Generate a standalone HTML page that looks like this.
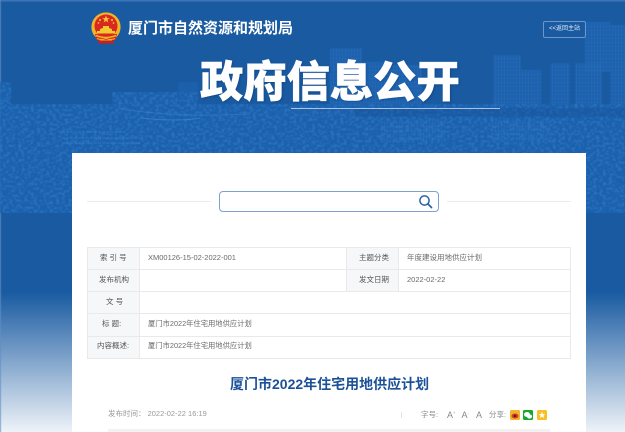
<!DOCTYPE html>
<html lang="zh-CN">
<head>
<meta charset="utf-8">
<title>厦门市2022年住宅用地供应计划</title>
<style>
html,body{margin:0;padding:0;width:625px;height:432px;overflow:hidden;background:#fff}
body{position:relative;font-family:"Liberation Sans","Noto Sans CJK SC",sans-serif}
.abs{position:absolute;white-space:nowrap}
#bg{position:absolute;left:0;top:0;width:625px;height:432px;background:linear-gradient(#195aa1 0,#195aa1 292px,#eef3f8 432px)}
#panel{position:absolute;left:72px;top:153px;width:514px;height:279px;background:#fff}
.line{position:absolute;background:#e9e9e9}
.cell{position:absolute;background:#f5f7f9}
.t{position:absolute;white-space:nowrap;font-size:7.5px;color:#6a6a6a;line-height:10px;filter:blur(.25px)}
</style>
</head>
<body>
<div id="bg"></div>
<svg class="abs" style="left:0;top:0" width="625" height="432" viewBox="0 0 625 432">
<defs>
<filter id="n1" x="0" y="0" width="100%" height="100%">
<feTurbulence type="fractalNoise" baseFrequency=".32 .42" numOctaves="2" seed="7" result="t"/>
<feColorMatrix in="t" type="matrix" values="0 0 0 0 0  0 0 0 0 0  0 0 0 0 0  0 0 0 5 -2.400" result="a"/>
<feComposite in="SourceGraphic" in2="a" operator="in"/>
<feGaussianBlur stdDeviation=".4"/>
</filter>
<filter id="soft" x="-5%" y="-5%" width="110%" height="110%"><feGaussianBlur stdDeviation=".5"/></filter>
<pattern id="st" width="3" height="4" patternUnits="userSpaceOnUse">
<rect width="1" height="4" fill="#2a74c0" opacity=".45"/>
<rect y="2" width="3" height="1" fill="#2a74c0" opacity=".25"/>
</pattern>
</defs>
<rect x="0" y="0" width="625" height="1.500" fill="#3c74b6"/>
<rect x="0" y="0" width="1.200" height="432" fill="#5f8fc6" opacity=".6"/>
<g filter="url(#soft)">
<g fill="#1c61ac">
<rect x="0" y="104" width="625" height="109"/>
<rect x="0" y="82" width="11" height="24"/>
<rect x="112" y="92" width="66" height="14"/>
<rect x="178" y="82" width="20" height="24"/>
<rect x="330" y="48" width="32" height="58"/>
<rect x="362" y="62" width="30" height="44"/>
<rect x="392" y="65" width="30" height="40"/>
<rect x="493" y="55" width="28" height="50"/>
<rect x="521" y="70" width="20" height="35"/>
<rect x="550" y="63" width="20" height="42"/>
<rect x="575" y="63" width="27" height="42"/>
<rect x="585" y="22" width="25" height="50"/>
<rect x="610" y="25" width="15" height="80"/>
</g>
<g fill="url(#st)">
<rect x="330" y="48" width="32" height="58"/>
<rect x="362" y="62" width="30" height="44"/>
<rect x="392" y="65" width="30" height="40"/>
<rect x="493" y="55" width="28" height="50"/>
<rect x="521" y="70" width="20" height="35"/>
<rect x="550" y="63" width="20" height="42"/>
<rect x="575" y="63" width="27" height="42"/>
<rect x="585" y="22" width="25" height="50"/>
<rect x="610" y="25" width="15" height="80"/>
<rect x="380" y="120" width="65" height="22"/>
<rect x="490" y="120" width="60" height="22"/>
</g>
</g>
<g filter="url(#n1)" fill="#2f7cca" opacity=".7">
<rect x="0" y="82" width="11" height="131"/>
<rect x="0" y="104" width="625" height="109"/>
<rect x="112" y="92" width="86" height="14"/>
</g>
<g fill="none" stroke="#3a86d4" stroke-width="1">
<path d="M118 108Q170 118 250 114" opacity=".5"/>
<path d="M140 118Q180 122 200 118" opacity=".7"/>
<path d="M62 132H125M62 138H140M62 143H140" stroke-dasharray="3 1" opacity=".6"/>
</g>
<rect x="355" y="108" width="270" height="9" fill="#174f94" opacity=".35" filter="url(#soft)"/>
</svg>

<!-- Emblem -->
<svg class="abs" style="left:90px;top:12px" width="32" height="34" viewBox="0 0 32 34">
<circle cx="16" cy="15" r="14.600" fill="#f0b429"/>
<circle cx="16" cy="14" r="11.500" fill="#d8281f"/>
<path d="M16 3.500l1 2.600h2.700l-2.200 1.700.8 2.700-2.300-1.600-2.300 1.600.8-2.700-2.200-1.700H15z" fill="#f6c933"/>
<circle cx="10" cy="8" r="1" fill="#f6c933"/><circle cx="22" cy="8" r="1" fill="#f6c933"/>
<circle cx="8.500" cy="11" r=".9" fill="#f6c933"/><circle cx="23.500" cy="11" r=".9" fill="#f6c933"/>
<path d="M10 19v-2l3-1v-2h6v2l3 1v2z" fill="#f6c933"/>
<rect x="7" y="19" width="18" height="2.500" fill="#f6c933"/>
<path d="M5 22h22l-1.500 6H6.500z" fill="#d8281f"/>
<path d="M6 23.500q10 4 20 0" stroke="#f0b429" stroke-width="1.600" fill="none"/>
<path d="M7 26.500q4.500 2 9 0q4.500 2 9 0" stroke="#f0b429" stroke-width="1.200" fill="none"/>
<rect x="8" y="28.500" width="16" height="3" rx="1" fill="#c9201d"/>
</svg>

<div class="abs" style="left:128px;top:20px;font-size:15px;line-height:18px;font-weight:bold;color:#fff;width:170px">厦门市自然资源和规划局</div>

<div class="abs" style="left:200px;top:56px;font-size:43.300px;line-height:54px;font-weight:900;color:#fff;text-shadow:1px 1px 2px rgba(10,40,90,.4);-webkit-text-stroke:.5px #fff">政府信息公开</div>
<div class="abs" style="left:291px;top:107.500px;width:209px;height:1.500px;background:#a9c2e2"></div>

<div class="abs" style="left:543px;top:21px;width:41px;height:14.500px;border:1px solid #6d97c9;border-radius:2px;font-size:6px;line-height:14.500px;color:#e4ecf6;text-align:center">&lt;&lt;返回主站</div>

<div id="panel"></div>

<!-- Search -->
<div class="line" style="left:87px;top:201px;width:124px;height:1px;background:#ececec"></div>
<div class="line" style="left:447px;top:201px;width:124px;height:1px;background:#ececec"></div>
<div class="abs" style="left:219px;top:191px;width:217.500px;height:18.500px;border:1.500px solid #7da2d0;border-radius:4px;background:#fff"></div>
<svg class="abs" style="left:418px;top:194px" width="15" height="15" viewBox="0 0 15 15">
<circle cx="6.500" cy="6.500" r="4.600" fill="none" stroke="#2c64a8" stroke-width="1.500"/>
<path d="M10 10l3.500 3.500" stroke="#2c64a8" stroke-width="1.800" stroke-linecap="round"/>
</svg>

<!-- Table -->
<div class="cell" style="left:87px;top:247px;width:53px;height:111px"></div>
<div class="cell" style="left:347px;top:247px;width:52px;height:44px"></div>
<div class="line" style="left:87px;top:247px;width:484px;height:1px"></div>
<div class="line" style="left:87px;top:269px;width:484px;height:1px"></div>
<div class="line" style="left:87px;top:291px;width:484px;height:1px"></div>
<div class="line" style="left:87px;top:313px;width:484px;height:1px"></div>
<div class="line" style="left:87px;top:336px;width:484px;height:1px"></div>
<div class="line" style="left:87px;top:358px;width:484px;height:1px"></div>
<div class="line" style="left:87px;top:247px;width:1px;height:112px"></div>
<div class="line" style="left:139px;top:247px;width:1px;height:112px"></div>
<div class="line" style="left:570px;top:247px;width:1px;height:112px"></div>
<div class="line" style="left:346px;top:247px;width:1px;height:44px"></div>
<div class="line" style="left:398px;top:247px;width:1px;height:44px"></div>

<div class="t" style="left:100px;top:253px;color:#555">索 引 号</div>
<div class="t" style="left:99px;top:275px;color:#555">发布机构</div>
<div class="t" style="left:106px;top:297px;color:#555">文 号</div>
<div class="t" style="left:102px;top:319px;color:#555">标 题:</div>
<div class="t" style="left:97px;top:341px;color:#555">内容概述:</div>
<div class="t" style="left:148px;top:253px">XM00126-15-02-2022-001</div>
<div class="t" style="left:148px;top:319px;font-size:7.300px">厦门市2022年住宅用地供应计划</div>
<div class="t" style="left:148px;top:341px;font-size:7.300px">厦门市2022年住宅用地供应计划</div>
<div class="t" style="left:359px;top:253px;color:#555">主题分类</div>
<div class="t" style="left:359px;top:275px;color:#555">发文日期</div>
<div class="t" style="left:407px;top:253px">年度建设用地供应计划</div>
<div class="t" style="left:407px;top:275px">2022-02-22</div>

<!-- Title -->
<div class="abs" style="left:230px;top:375px;font-size:14px;line-height:18px;font-weight:bold;color:#1c5197">厦门市2022年住宅用地供应计划</div>

<!-- Meta -->
<div class="t" style="left:108px;top:409px;color:#999">发布时间： 2022-02-22 16:19</div>
<div class="abs" style="left:401px;top:412px;width:1px;height:6px;background:#e3e3e3"></div>
<div class="t" style="left:421px;top:410px;color:#888">字号:</div>
<div class="t" style="left:447px;top:410px;color:#888;font-size:9px">A<sup style="font-size:4px;line-height:0">+</sup></div>
<div class="t" style="left:461.500px;top:410px;color:#888;font-size:9px">A<sup style="font-size:4px;line-height:0">-</sup></div>
<div class="t" style="left:476px;top:410px;color:#888;font-size:9px">A</div>
<div class="t" style="left:489px;top:410px;color:#888">分享:</div>
<svg class="abs" style="left:510px;top:410px" width="38" height="11" viewBox="0 0 38 11">
<rect x="0" y="0" width="10" height="10" rx="1.500" fill="#f4b324"/>
<ellipse cx="5" cy="6" rx="3.500" ry="2.500" fill="#d6392b"/>
<circle cx="5" cy="6" r="1.200" fill="#3a2a20"/>
<rect x="13" y="0" width="10" height="10" rx="1.500" fill="#12a92e"/>
<ellipse cx="17" cy="4.500" rx="3" ry="2.500" fill="#fff"/>
<ellipse cx="19.500" cy="6.500" rx="2.600" ry="2.100" fill="#fff"/>
<rect x="27" y="0" width="10" height="10" rx="1.500" fill="#f7c026"/>
<path d="M32 1.800l.9 2.300h2.400l-1.900 1.500.7 2.400-2.100-1.400-2.100 1.400.7-2.400-1.900-1.500h2.400z" fill="#fff"/>
</svg>
<div class="abs" style="left:108px;top:429px;width:442px;height:3px;background:#f2f2f2"></div>
</body>
</html>
